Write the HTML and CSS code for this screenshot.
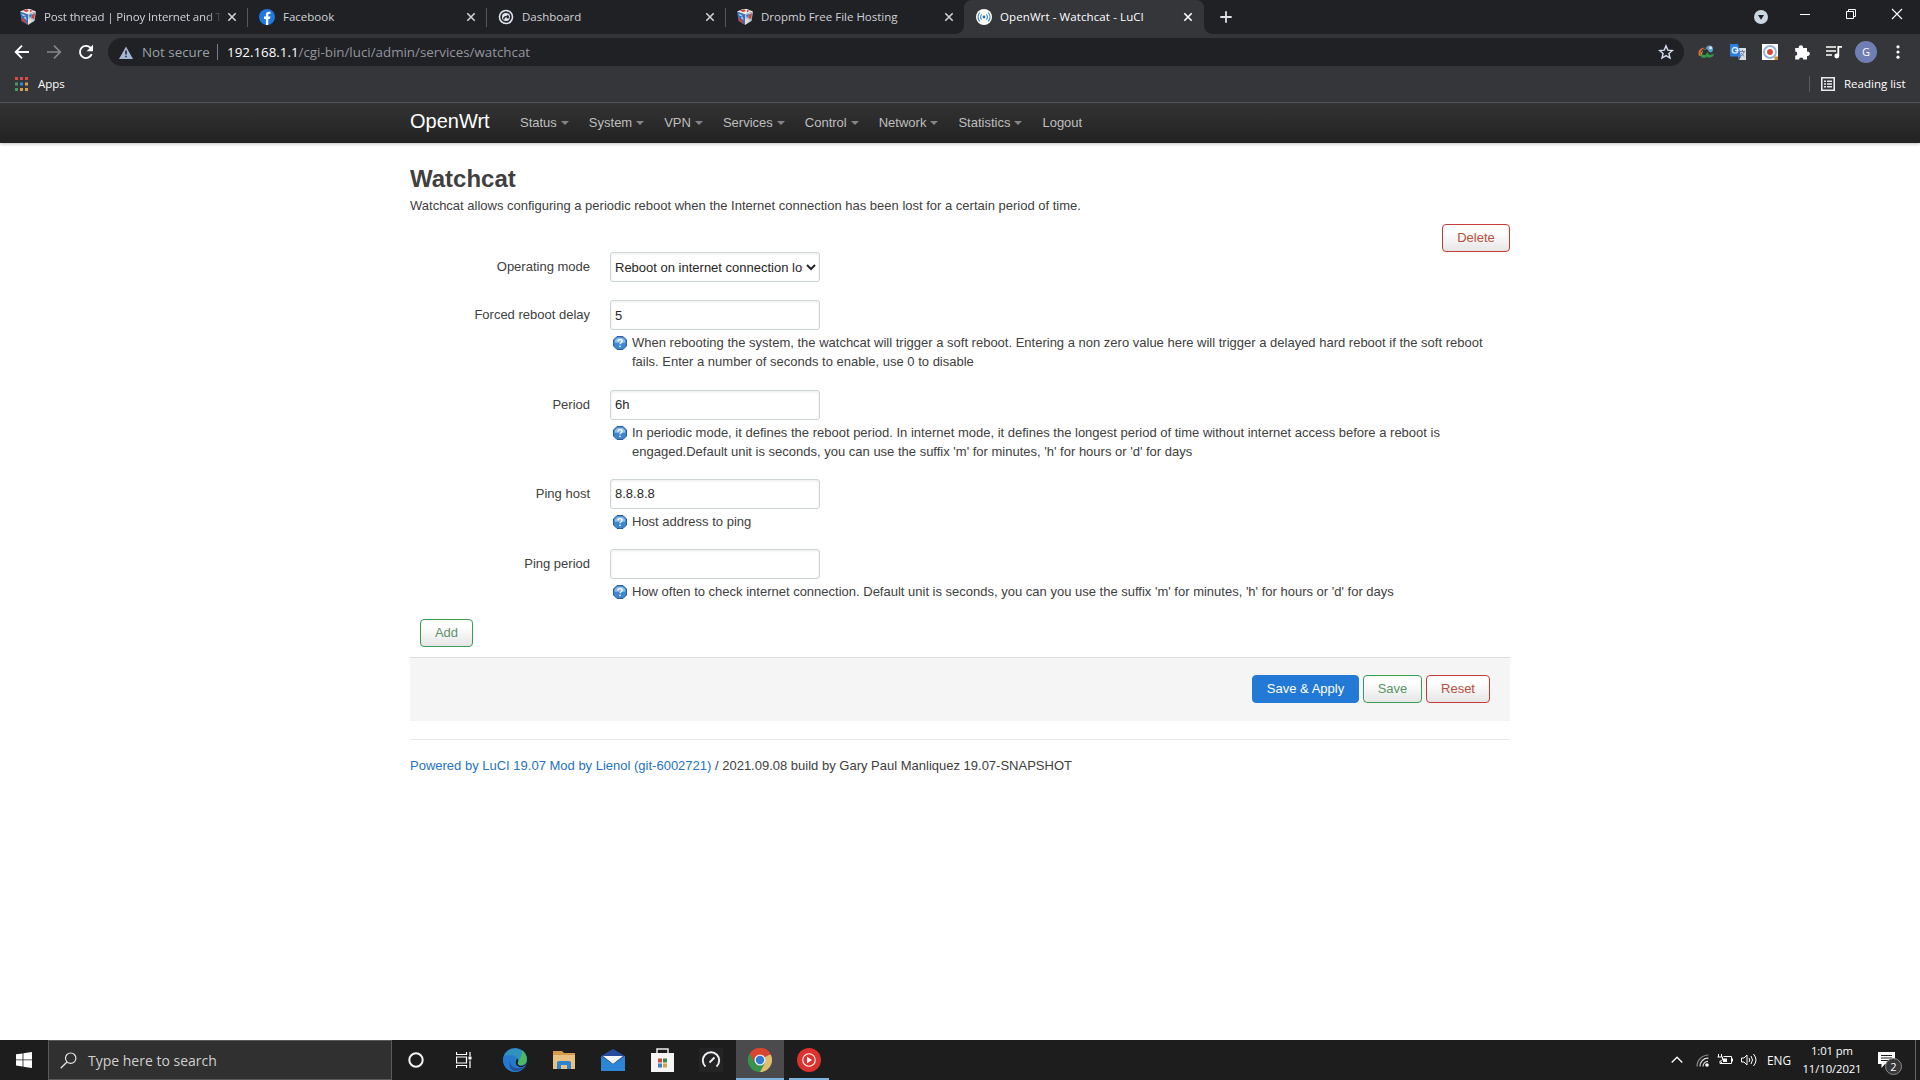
FILE: index.html
```
<!DOCTYPE html>
<html lang="en">
<head>
  <meta charset="UTF-8" />
  <meta name="viewport" content="width=device-width, initial-scale=1.0"/>
  <title>OpenWrt - Watchcat - LuCI</title>
  <link rel="stylesheet" href="styles.css">
</head>
<body>

  <svg class="defs" width="0" height="0">
    <symbol id="icon-cube" viewBox="0 0 16 16">
      <path d="M0 2.5L8 5.5V16L1.5 12z" fill="#3470bb"/>
      <path d="M16 2.5L8 5.5V16l6.5-4z" fill="#b8cbdc"/>
      <path d="M0 2.5L6 0h4l6 2.5-8 3z" fill="#e7e9ea"/>
      <path d="M3 1.5l4-1.2 2 1.8-3 1zM10 1l3 .8-3 1.4zM1 8l4 3 2 4-5-3zM12 6l3-2-.8 6-3-1z" fill="#cf3f38"/>
      <path d="M1 4.5l5 2-3 .5zM5 7l2 4-3-2z" fill="#b9d7ef"/>
      <path d="M9 6l4-1-3 4z" fill="#3c79bd"/>
      <path d="M8 10l4 1-2 3-2 1.5z" fill="#f3dfc7"/>
    </symbol>
    <symbol id="icon-close" viewBox="0 0 16 16">
      <path d="M4.3 4.3l7.4 7.4M11.7 4.3l-7.4 7.4" fill="none" stroke="currentColor" stroke-width="1.6"/>
    </symbol>
    <symbol id="icon-help" viewBox="0 0 14 14">
      <path d="M4 .5h6L13.5 4v6L10 13.5H4L.5 10V4z" fill="#3f86cf" stroke="#2a5f9c"/>
      <path d="M4.4 1.7h5.2l2.6 2.6v2.4H1.8V4.3z" fill="#8dbde9"/>
      <path d="M5 5.4c0-2.5 4.2-2.3 4.2-.1C9.2 6.8 7 6.7 7 8.3" fill="none" stroke="#fff" stroke-width="1.3"/>
      <circle cx="7" cy="10.4" r=".8" fill="#fff"/>
    </symbol>
  </svg>

  <div class="browser">
    <div class="tab-strip">
      <div class="tab">
        <svg class="favicon"><use href="#icon-cube"/></svg>
        <span class="tab-title fade">Post thread | Pinoy Internet and T</span>
        <svg class="tab-close"><use href="#icon-close"/></svg>
      </div>
      <div class="tab">
        <svg class="favicon" viewBox="0 0 16 16"><circle cx="8" cy="8" r="8" fill="#1f78e0"/><path d="M6.9 16V10H5V7.6h1.9V6c0-2.2 1.2-3.3 3-3.3l1.6.1v2h-1c-.9 0-1.2.5-1.2 1.2v1.6h2.1L11 10H9.3v6z" fill="#fff"/></svg>
        <span class="tab-title">Facebook</span>
        <svg class="tab-close"><use href="#icon-close"/></svg>
      </div>
      <div class="tab">
        <svg class="favicon" viewBox="0 0 16 16"><circle cx="8" cy="8" r="7.3" fill="#e1e5ee"/><circle cx="8" cy="8" r="4.9" fill="none" stroke="#25282e" stroke-width="1.7"/><path d="M5 10.5c0-3 2-4 4-3.8l1-1.2 1.6 4-3.3-.3.7-1.2c-1.5 0-2.5 1-2.5 2.5z" fill="#25282e"/></svg>
        <span class="tab-title">Dashboard</span>
        <svg class="tab-close"><use href="#icon-close"/></svg>
      </div>
      <div class="tab last">
        <svg class="favicon"><use href="#icon-cube"/></svg>
        <span class="tab-title">Dropmb Free File Hosting</span>
        <svg class="tab-close"><use href="#icon-close"/></svg>
      </div>
      <div class="tab active">
        <svg class="favicon" viewBox="0 0 16 16"><circle cx="8" cy="8" r="8" fill="#fff"/><circle cx="8" cy="8" r="1.4" fill="#1f6fae"/><path d="M5.8 5.3a3.6 3.6 0 0 0 0 5.4M10.2 5.3a3.6 3.6 0 0 1 0 5.4M3.8 3.7a6 6 0 0 0 0 8.6M12.2 3.7a6 6 0 0 1 0 8.6" fill="none" stroke="#3f82ba" stroke-width="1.1"/></svg>
        <span class="tab-title">OpenWrt - Watchcat - LuCI</span>
        <svg class="tab-close"><use href="#icon-close"/></svg>
      </div>
      <svg class="new-tab" viewBox="0 0 14 14"><path d="M7 1.3v11.4M1.3 7h11.4" stroke="#dee1e6" stroke-width="1.8"/></svg>
      <div class="window-buttons">
        <svg class="tab-search" viewBox="0 0 14 14"><circle cx="7" cy="7" r="7" fill="#c9d8e0"/><path d="M4 5h6L7 9.8z" fill="#202124"/></svg>
        <svg class="win-btn" viewBox="0 0 12 12"><path d="M1 6.5h10" stroke="#fff"/></svg>
        <svg class="win-btn" viewBox="0 0 12 12"><path d="M1.5 3.5h7v7h-7zM3.5 3.5v-2h7v7h-2" fill="none" stroke="#fff"/></svg>
        <svg class="win-btn" viewBox="0 0 12 12"><path d="M1 1l10 10M11 1L1 11" stroke="#fff" stroke-width="1.1"/></svg>
      </div>
    </div>

    <div class="toolbar">
      <svg class="nav-icon" viewBox="0 0 16 16"><path d="M15 8H2M8 1.7L1.7 8 8 14.3" fill="none" stroke="#fff" stroke-width="1.9"/></svg>
      <svg class="nav-icon" viewBox="0 0 16 16"><path d="M1 8h13M8 1.7L14.3 8 8 14.3" fill="none" stroke="#84868b" stroke-width="1.7"/></svg>
      <svg class="nav-icon" viewBox="0 0 16 16"><path d="M13.7 10.2A6.1 6.1 0 1 1 12.4 3.7L14 5.3" fill="none" stroke="#fff" stroke-width="1.9"/><path d="M15 .8v6.4H8.6z" fill="#fff"/></svg>
      <div class="omnibox">
        <svg class="warn" viewBox="0 0 14 13"><path d="M7 .5L14 13H0z" fill="#a3b6d4"/><path d="M7 4.5v4M7 9.7v1.6" stroke="#202124" stroke-width="1.5"/></svg>
        <span class="not-secure">Not secure</span>
        <span class="omni-sep"></span>
        <span class="url"><b>192.168.1.1</b><i>/cgi-bin/luci/admin/services/watchcat</i></span>
        <svg class="star" viewBox="0 0 16 16"><path d="M8 1.9l1.8 4.2 4.6.4-3.5 3 1.1 4.5L8 11.6 4 14l1.1-4.5-3.5-3 4.6-.4z" fill="none" stroke="#d3dfee" stroke-width="1.4"/></svg>
      </div>
      <div class="extensions">
        <svg viewBox="0 0 16 16"><path d="M1 12c-2-5 2-9 6-8-4 1-5 4-4 8z" fill="#df6845"/><path d="M3 11c0-3 2-6 5-6l1 3z" fill="#e5c04a"/><circle cx="11.5" cy="5" r="3.6" fill="#5c9ed4"/><circle cx="12.5" cy="3.7" r="1.5" fill="#dcecf4"/><path d="M5 6l4-1 3 4-3 3-5-2z" fill="#27362c"/><path d="M2 10.5l5 .5 3-3 1 3 5-1c-1 4-4 4-7 3l-3 1c-2 0-3-1-4-3.5z" fill="#329846"/></svg>
        <svg viewBox="0 0 16 16"><path d="M6 4h10v12H9z" fill="#d8dce4"/><path d="M0 0h8l3 12.5H0z" fill="#2f7fdd"/><circle cx="5" cy="6.3" r="2.8" fill="none" stroke="#dceaff" stroke-width="1.4"/><path d="M5 6.4h3" stroke="#fff"/><path d="M10 7.5h5M12.5 6v2M14 8c-.5 2-2 3.5-3 4M11 9l3 3.5" fill="none" stroke="#718199"/><path d="M8 12.5h3L9.2 16z" fill="#265b9f"/></svg>
        <svg viewBox="0 0 16 16"><path d="M0 0h16v16H0z" fill="#fff"/><circle cx="8" cy="8" r="6" fill="none" stroke="#8fb5da" stroke-width="1.9"/><circle cx="8" cy="8" r="2.9" fill="#d84935"/><path d="M12.5 12.5H16V16h-3.5z" fill="#d18a30"/></svg>
        <svg viewBox="0 0 16 16"><path d="M1.2 4h3.6a2.2 2.2 0 1 1 4.2 0H13v3.7a2.2 2.2 0 1 1 0 4.2V15.5H9.3a2.1 2.1 0 1 0-4.2 0H1.2v-3.7a2.1 2.1 0 1 0 0-4.2z" fill="#fff"/></svg>
        <svg viewBox="0 0 16 16"><path d="M0 3h10M0 7h10M0 11h6" stroke="#fff" stroke-width="1.7"/><path d="M12.3 12V2.9H16" fill="none" stroke="#fff" stroke-width="1.8"/><circle cx="10.8" cy="12" r="2.4" fill="#fff"/></svg>
        <span class="avatar">G</span>
        <svg viewBox="0 0 16 16"><circle cx="8" cy="2.8" r="1.6" fill="#fff"/><circle cx="8" cy="8" r="1.6" fill="#fff"/><circle cx="8" cy="13.2" r="1.6" fill="#fff"/></svg>
      </div>
    </div>

    <div class="bookmarks">
      <svg class="apps-icon" viewBox="0 0 13 14"><path d="M0 0h3v3H0zM5 0h3v3H5zM10 0h3v3h-3z" fill="#df4a43"/><path d="M0 5.5h3v3H0zM0 11h3v3H0z" fill="#43a160"/><path d="M5 5.5h3v3H5z" fill="#3984d8"/><path d="M10 5.5h3v3h-3zM5 11h3v3H5zM10 11h3v3h-3z" fill="#d6a052"/></svg>
      <span>Apps</span>
      <span class="reading-sep"></span>
      <svg class="reading-icon" viewBox="0 0 14 14"><path d="M.8.8h12.4v12.4H.8z" fill="none" stroke="#e8eaed" stroke-width="1.6"/><path d="M3 4.2h2M6 4.2h5M3 7h2M6 7h5M3 9.8h2M6 9.8h5" stroke="#e8eaed" stroke-width="1.4"/></svg>
      <span class="reading-label">Reading list</span>
    </div>
  </div>

  <header>
    <div class="container header-row">
      <a class="brand" href="#">OpenWrt</a>
      <ul class="nav">
        <li><a class="menu" href="#">Status</a></li>
        <li><a class="menu" href="#">System</a></li>
        <li><a class="menu" href="#">VPN</a></li>
        <li><a class="menu" href="#">Services</a></li>
        <li><a class="menu" href="#">Control</a></li>
        <li><a class="menu" href="#">Network</a></li>
        <li><a class="menu" href="#">Statistics</a></li>
        <li><a href="#">Logout</a></li>
      </ul>
    </div>
  </header>

  <main class="container">
    <h2>Watchcat</h2>
    <div class="map-descr">Watchcat allows configuring a periodic reboot when the Internet connection has been lost for a certain period of time.</div>

    <div class="section-remove"><button class="btn remove">Delete</button></div>

    <div class="value">
      <label>Operating mode</label>
      <div class="field">
        <select><option>Reboot on internet connection lost</option></select>
      </div>
    </div>
    <div class="value">
      <label>Forced reboot delay</label>
      <div class="field">
        <input type="text" value="5">
        <div class="descr"><svg><use href="#icon-help"/></svg><span>When rebooting the system, the watchcat will trigger a soft reboot. Entering a non zero value here will trigger a delayed hard reboot if the soft reboot<br>fails. Enter a number of seconds to enable, use 0 to disable</span></div>
      </div>
    </div>
    <div class="value">
      <label>Period</label>
      <div class="field">
        <input type="text" value="6h">
        <div class="descr"><svg><use href="#icon-help"/></svg><span>In periodic mode, it defines the reboot period. In internet mode, it defines the longest period of time without internet access before a reboot is<br>engaged.Default unit is seconds, you can use the suffix 'm' for minutes, 'h' for hours or 'd' for days</span></div>
      </div>
    </div>
    <div class="value">
      <label>Ping host</label>
      <div class="field">
        <input type="text" value="8.8.8.8">
        <div class="descr"><svg><use href="#icon-help"/></svg><span>Host address to ping</span></div>
      </div>
    </div>
    <div class="value">
      <label>Ping period</label>
      <div class="field">
        <input type="text" value="">
        <div class="descr"><svg><use href="#icon-help"/></svg><span>How often to check internet connection. Default unit is seconds, you can you use the suffix 'm' for minutes, 'h' for hours or 'd' for days</span></div>
      </div>
    </div>

    <div class="section-create"><button class="btn add">Add</button></div>

    <div class="page-actions">
      <button class="btn apply">Save &amp; Apply</button>
      <button class="btn save">Save</button>
      <button class="btn reset">Reset</button>
    </div>

    <footer><a href="#">Powered by LuCI 19.07 Mod by Lienol (git-6002721)</a> / 2021.09.08 build by Gary Paul Manliquez 19.07-SNAPSHOT</footer>
  </main>

  <div class="taskbar">
    <div class="start"><svg width="16" height="16" viewBox="0 0 16 16"><path d="M0 2.3l6.6-.9v6.1H0zM7.4 1.3L16 0v7.5H7.4zM0 8.3h6.6v6.2L0 13.6zM7.4 8.3H16V16l-8.6-1.3z" fill="#fff"/></svg></div>
    <div class="search">
      <svg width="17" height="17" viewBox="0 0 17 17"><circle cx="10.7" cy="6.2" r="5.2" fill="none" stroke="#e6e6e6" stroke-width="1.2"/><path d="M7 10L.7 16.2" stroke="#e6e6e6" stroke-width="1.3"/></svg>
      <span>Type here to search</span>
    </div>
    <div class="task narrow"><svg width="16" height="16" viewBox="0 0 16 16"><circle cx="8" cy="8" r="6.7" fill="none" stroke="#f4f4fa" stroke-width="2"/></svg></div>
    <div class="task narrow"><svg width="16" height="16" viewBox="0 0 16 16"><path d="M.5 0v2.5h10V0M.5 16v-2.5h10V16M.5 5h10v6H.5zM14 0v4M14 8.5V16" fill="none" stroke="#fff" stroke-width="1.2"/><path d="M12.5 4.5h3v3h-3z" fill="#fff"/></svg></div>
    <div class="task first"><svg width="24" height="24" viewBox="0 0 24 24"><circle cx="12" cy="12" r="12" fill="#2a7fcb"/><path d="M1 8C5-1 18-2 23 7c2 5 0 10-6 10-3 0-4-1-3-3 3-5-4-9-13-6z" fill="#2f93bd"/><path d="M19 2.3c6 4 7 14.7-1 14.7-4 0-5-1-4-3 3-2 5-6 5-11.7z" fill="#4bb963"/><path d="M1 8c6-2 13 2 12 5-2 5 3 8 8 6-3 5-9 6-13 4C1 20-1 14 1 8z" fill="#2479ce"/><path d="M7 13c0 6 6 9 14 6-5 7-17 5-14-6z" fill="#235296"/><path d="M14 10.5c3 2 0 4 1 6 2 2.5 6 1.5 9-2-2 5-7 6-10 3-2-2-1-5 0-7z" fill="#1d1d1d"/></svg></div>
    <div class="task"><svg width="22" height="18" viewBox="0 0 22 18"><path d="M0 0h9l2 2h11v16H0z" fill="#d69b48"/><path d="M0 4h22v14H0z" fill="#e9c283"/><path d="M4 18v-7l2-1h10l2 1v7h-4v-4H8v4z" fill="#2c86ce"/></svg></div>
    <div class="task"><svg width="24" height="22" viewBox="0 0 24 22"><path d="M0 7l12-7 12 7v4H0z" fill="#264d9c"/><path d="M2 7h20l-10 8z" fill="#f4f8ff"/><path d="M0 7l12 8 12-8v15H0z" fill="#2e85d6"/></svg></div>
    <div class="task"><svg width="23" height="24" viewBox="0 0 23 24"><path d="M6 6V1h11v5" fill="none" stroke="#eee" stroke-width="1.5"/><path d="M0 5h23v19H0z" fill="#f5f5f5"/><path d="M7 10.5h4v4H7z" fill="#cf4b3c"/><path d="M12 10.5h4v4h-4z" fill="#398b48"/><path d="M7 15.5h4v4H7z" fill="#3b80c7"/><path d="M12 15.5h4v4h-4z" fill="#d6a03f"/></svg></div>
    <div class="task"><svg class="speed" width="24" height="24" viewBox="0 0 24 24"><path d="M6.5 18.5A8.2 8.2 0 1 1 17.5 18.5M10.5 14.5l5-5" fill="none" stroke="#f1f1f5" stroke-width="1.9"/></svg></div>
    <div class="task running current"><svg width="24" height="24" viewBox="0 0 24 24"><path d="M12 12L1.6 6A12 12 0 0 1 22.4 6z" fill="#d9452f"/><path d="M12 12L1.6 6A12 12 0 0 0 12 24z" fill="#37924a"/><path d="M12 12L12 24A12 12 0 0 0 22.4 6z" fill="#e2bd70"/><path d="M1.6 6L7 15l5-8h10.9l-.5-1A12 12 0 0 0 1.6 6z" fill="#d9452f"/><path d="M1.6 6L7 15l5 2 5-2-5 9A12 12 0 0 1 1.6 6z" fill="#37924a"/><circle cx="12" cy="12" r="5.5" fill="#e6edf5"/><circle cx="12" cy="12" r="4.2" fill="#2e7bd0"/></svg></div>
    <div class="task running"><svg width="24" height="24" viewBox="0 0 24 24"><circle cx="12" cy="12" r="12" fill="#dc322f"/><circle cx="12" cy="12" r="6.3" fill="none" stroke="#fff" stroke-width="1.1"/><path d="M10 8.8l5 3.2-5 3.2z" fill="#fff"/></svg></div>

    <div class="tray">
      <svg width="12" height="12" viewBox="0 0 12 12"><path d="M.7 8.5L6 3.2l5.3 5.3" fill="none" stroke="#fff" stroke-width="1.3"/></svg>
      <svg class="wifi" width="13" height="13" viewBox="0 0 13 13"><circle cx="11" cy="11" r="1.8" fill="#fff"/><path d="M7 12.5A5 5 0 0 1 12 7.3M4 12.5A8 8 0 0 1 12.5 4.2" fill="none" stroke="#ddd" stroke-width="1.2"/><path d="M1 12.5A11.5 11.5 0 0 1 12.5 1" fill="none" stroke="#8e8e8e" stroke-width="1.2"/></svg>
      <svg class="battery" width="16" height="12" viewBox="0 0 16 12"><path d="M6.5 2.5h8v7h-10V8M15.5 4.5v3M1.5 0v3M4.5 0v3M.5 3h5v2a2 2 0 0 1-2.5 2v2.5h2" fill="none" stroke="#fff"/><path d="M6 4.5h4V8H6z" fill="#fff"/></svg>
      <svg class="volume" width="16" height="14" viewBox="0 0 16 14"><path d="M.5 5H3l3-3v10L3 9H.5zM8 5q1.5 2 0 4M10 3q3 4 0 8M12.5 1q5 6 0 12" fill="none" stroke="#fff"/></svg>
      <span class="lang">ENG</span>
      <div class="clock"><span>1:01 pm</span><span>11/10/2021</span></div>
      <div class="notice"><svg width="17" height="17" viewBox="0 0 17 17"><path d="M0 0h17v12H7l-3.5 4v-4H0z" fill="#fff"/><path d="M3 3.5h11M3 6h11M3 8.5h8" stroke="#1d1d1d"/></svg><span class="badge">2</span></div>
      <span class="show-desktop"></span>
    </div>
  </div>

</body>
</html>
```
FILE: styles.css
```
* {
  box-sizing: border-box;
}

body {
  margin: 0;
  height: 1080px;
  display: flex;
  flex-direction: column;
  background: #fff;
  color: #404040;
  font-family: "Liberation Sans", Arial, sans-serif;
  font-size: 13px;
  line-height: 19px;
  overflow: hidden;
}

a {
  color: #2574bf;
  text-decoration: none;
}

svg {
  display: block;
  flex: none;
}

.defs {
  position: absolute;
}

/* browser */
.browser {
  background: #35363a;
  color: #fff;
  font-family: "Open Sans", "Noto Sans", sans-serif;
  font-size: 11.5px;
  height: 103px;
  border-bottom: 1px solid #58595c;
}

.tab-strip {
  display: flex;
  height: 34px;
  padding-left: 8px;
  background: #202124;
}

.tab {
  display: flex;
  align-items: center;
  width: 239px;
  padding: 0 7px 0 12px;
  position: relative;
  color: #d0d2d8;
}

.tab:not(.last):not(.active):after {
  content: "";
  position: absolute;
  right: -1px;
  top: 8px;
  width: 1px;
  height: 19px;
  background: #55575c;
}

.tab.active {
  width: 240px;
  padding-right: 8px;
  background: #35363a;
  border-radius: 8px 8px 0 0;
  color: #fff;
}

.tab.active:before,
.tab.active:after {
  content: "";
  position: absolute;
  bottom: 0;
  width: 8px;
  height: 8px;
}

.tab.active:before {
  left: -8px;
  background: radial-gradient(circle at 0 0, transparent 7.5px, #35363a 8px);
}

.tab.active:after {
  right: -8px;
  background: radial-gradient(circle at 100% 0, transparent 7.5px, #35363a 8px);
}

.favicon,
.tab-close {
  width: 16px;
  height: 16px;
}

.tab-title {
  flex: 1;
  margin: 0 0 1px 8px;
  white-space: nowrap;
}

.tab-title.fade {
  letter-spacing: -0.15px;
  -webkit-mask-image: linear-gradient(90deg, #000 162px, transparent 178px);
  mask-image: linear-gradient(90deg, #000 162px, transparent 178px);
}

.tab.active .tab-title {
  letter-spacing: 0.1px;
}

.new-tab {
  width: 14px;
  height: 14px;
  margin: 10px 0 0 15px;
}

.window-buttons {
  display: flex;
  margin-left: auto;
  padding: 8px 17px 0 0;
}

.tab-search {
  width: 14px;
  height: 14px;
  margin: 2px 31px 0 0;
}

.win-btn {
  width: 12px;
  height: 12px;
  margin-right: 34px;
}

.win-btn:last-child {
  margin-right: 0;
}

.toolbar {
  display: flex;
  align-items: center;
  height: 36px;
  padding: 0 14px;
}

.nav-icon {
  width: 16px;
  height: 16px;
  margin-right: 16px;
}

.omnibox {
  display: flex;
  align-items: center;
  width: 1576px;
  height: 28px;
  margin-left: -2px;
  padding: 0 10px 0 11px;
  border-radius: 14px;
  background: #202124;
  font-size: 13.35px;
}

.warn {
  width: 14px;
  height: 13px;
}

.not-secure {
  width: 67px;
  margin: 1px 8px 0 9px;
  color: #9aa0a6;
  white-space: nowrap;
}

.omni-sep {
  width: 1px;
  height: 16px;
  margin-right: 9px;
  background: #7b7d83;
}

.url {
  margin-top: 1px;
  white-space: nowrap;
}

.url b {
  font-weight: normal;
}

.url i {
  font-style: normal;
  color: #94959f;
}

.star {
  width: 16px;
  height: 16px;
  margin-left: auto;
}

.extensions {
  display: flex;
  align-items: center;
  margin-left: 14px;
}

.extensions svg {
  width: 16px;
  height: 16px;
  margin-right: 16px;
}

.extensions svg:last-child {
  margin-right: 0;
}

.avatar {
  width: 22px;
  height: 22px;
  margin: 0 13px 0 -3px;
  border-radius: 50%;
  background: #6f7fb4;
  text-align: center;
  font-size: 11px;
  line-height: 22px;
}

.bookmarks {
  display: flex;
  align-items: center;
  height: 28px;
  padding: 0 14px 0 15px;
}

.bookmarks span {
  margin-bottom: 1px;
}

.apps-icon {
  width: 13px;
  height: 14px;
  margin-right: 10px;
}

.bookmarks .reading-sep {
  width: 1px;
  height: 16px;
  margin: 0 11px 0 auto;
  background: #5b5c60;
}

.reading-icon {
  width: 14px;
  height: 14px;
  margin-right: 9px;
}

.reading-label {
  width: 62px;
  white-space: nowrap;
}

/* luci */
.container {
  width: 1100px;
  margin: 0 auto;
}

header {
  height: 40px;
  background: linear-gradient(#333, #222);
  box-shadow: 0 1px 3px rgba(0,0,0,0.25);
}

.header-row {
  display: flex;
}

.brand {
  width: 100px;
  color: #fff;
  font-size: 20px;
  line-height: 36px;
}

.nav {
  display: flex;
  margin: 0;
  padding: 0;
  list-style: none;
}

.nav a {
  display: flex;
  align-items: center;
  padding: 0 10px;
  color: #bfbfbf;
  line-height: 39px;
}

.nav a.menu:after {
  content: "";
  margin-left: 4px;
  border-left: 4px solid transparent;
  border-right: 4px solid transparent;
  border-top: 4px solid #858589;
}

h2 {
  margin: 18px 0 0;
  font-size: 24px;
  line-height: 35px;
}

.map-descr {
  margin-bottom: 9px;
}

.section-remove {
  display: flex;
  justify-content: flex-end;
  height: 28px;
}

.btn {
  height: 28px;
  padding: 0 0 2px;
  border: 1px solid #3a9e52;
  border-radius: 4px;
  background: linear-gradient(#fff, #fff 25%, #e6e6e6);
  color: #5c9468;
  font: 13px "Liberation Sans", Arial, sans-serif;
  white-space: nowrap;
}

.btn.remove,
.btn.reset {
  border-color: #c43c35;
  color: #b4503e;
}

.btn.remove {
  width: 68px;
}

.value {
  display: flex;
  margin-bottom: 18.25px;
}

.value label {
  width: 180px;
  margin-right: 20px;
  padding-top: 5px;
  text-align: right;
}

.field select,
.field input {
  display: block;
  width: 210px;
  height: 30px;
  padding: 4px;
  border: 1px solid #ccd5d3;
  border-radius: 3px;
  background: #fff;
  box-shadow: inset 0 1px 3px rgba(0,0,0,0.08);
  color: #262626;
  font: 13px "Liberation Sans", Arial, sans-serif;
}

.field select {
  padding: 4px 0;
}

.descr {
  display: flex;
  margin-top: 3px;
  padding-left: 3px;
  white-space: nowrap;
}

.descr svg {
  width: 14px;
  height: 14px;
  margin: 3px 5px 0 0;
}

.section-create {
  padding-left: 10px;
}

.btn.add {
  display: block;
  width: 53px;
}

.page-actions {
  display: flex;
  justify-content: flex-end;
  gap: 4px;
  height: 64px;
  margin: 10px 0 18px;
  padding: 17px 20px 0 0;
  border-top: 1px solid #ddd;
  background: #f5f5f5;
}

.btn.apply {
  width: 107px;
  border-color: #2379d6;
  background: #2379d6;
  color: #fff;
}

.btn.save {
  width: 59px;
}

.btn.reset {
  width: 64px;
}

footer {
  padding-top: 16px;
  border-top: 1px solid #eaeaea;
}

/* taskbar */
.taskbar {
  display: flex;
  height: 40px;
  margin-top: auto;
  background: #1d1d1d;
  color: #fff;
  font-family: "Open Sans", "Noto Sans", sans-serif;
}

.start {
  display: flex;
  align-items: center;
  justify-content: center;
  width: 48px;
}

.search {
  display: flex;
  align-items: center;
  width: 344px;
  padding-left: 11px;
  border: 1px solid #5b5b5b;
  background: #303031;
  color: #cfcfcf;
  font-size: 14px;
}

.search span {
  margin-left: 11px;
}

.task {
  display: flex;
  align-items: center;
  justify-content: center;
  width: 48px;
  margin-right: 1px;
  position: relative;
}

.task.narrow {
  margin-right: 0;
}

.task.first {
  margin-left: 3px;
}

.task.current {
  background: #4b4b4d;
}

.task.running:after {
  content: "";
  position: absolute;
  left: 4px;
  right: 4px;
  bottom: 0;
  height: 2px;
  background: #7db3e0;
}

.task.current:after {
  left: 0;
  right: 0;
}

.speed {
  background: #242425;
}

.tray {
  display: flex;
  align-items: center;
  margin-left: auto;
  font-size: 11.3px;
}

.wifi {
  margin-left: 13px;
}

.battery {
  margin-left: 8px;
}

.volume {
  margin-left: 8px;
}

.lang {
  width: 23px;
  margin-left: 10px;
  font-size: 11.8px;
}

.clock {
  display: flex;
  flex-direction: column;
  align-items: center;
  width: 58px;
  margin-left: 13px;
  line-height: 18px;
  letter-spacing: -0.1px;
  white-space: nowrap;
}

.notice {
  margin-left: 17px;
  position: relative;
}

.badge {
  position: absolute;
  left: 7px;
  top: 6px;
  width: 17px;
  height: 17px;
  border: 1px solid #8b8b8b;
  border-radius: 50%;
  background: #373739;
  text-align: center;
  font-size: 11px;
  line-height: 15px;
}

.show-desktop {
  width: 5px;
  height: 40px;
  margin-left: 20px;
  border-left: 1px solid #666;
}
```
